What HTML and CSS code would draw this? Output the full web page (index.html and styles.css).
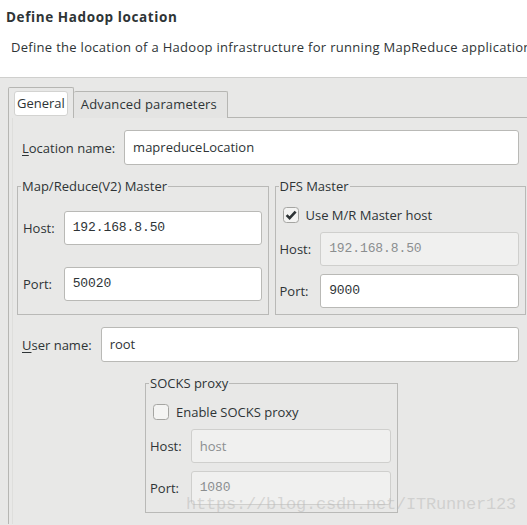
FILE: index.html
```html
<!DOCTYPE html>
<html>
<head>
<meta charset="utf-8">
<link rel="stylesheet" href="styles.css">
</head>
<body>
<header class="head">
  <h1 class="title">Define Hadoop location</h1>
  <p class="desc">Define the location of a Hadoop infrastructure for running MapReduce application</p>
</header>
<div class="folder">
  <div class="tabs">
    <div class="tab tab-active"><span class="tab-focus">General</span></div>
    <div class="tab tab-normal">Advanced parameters</div>
  </div>
  <div class="panel">
    <div class="content">
      <div class="row">
        <label class="lbl"><u>L</u>ocation name:</label>
        <div class="input">mapreduceLocation</div>
      </div>
      <div class="groups">
        <fieldset class="group">
          <legend>Map/Reduce(V2) Master</legend>
          <div class="grid grid-mr">
            <label class="lbl">Host:</label>
            <div class="input mono">192.168.8.50</div>
            <label class="lbl">Port:</label>
            <div class="input mono">50020</div>
          </div>
        </fieldset>
        <fieldset class="group">
          <legend>DFS Master</legend>
          <div class="grid">
            <div class="check-row">
              <span class="check">
                <svg width="16" height="16" viewBox="0 0 16 16"><rect x="0.5" y="0.5" width="15" height="15" rx="3" fill="#f4f4f3" stroke="#a5a5a2"/><path d="M3.6 8.2 L6.6 11.2 L12.6 4.6" fill="none" stroke="#2e3436" stroke-width="2.6"/></svg>
              </span>
              <span>Use M/R Master host</span>
            </div>
            <label class="lbl">Host:</label>
            <div class="input mono disabled">192.168.8.50</div>
            <label class="lbl">Port:</label>
            <div class="input mono">9000</div>
          </div>
        </fieldset>
      </div>
      <div class="row row-user">
        <label class="lbl"><u>U</u>ser name:</label>
        <div class="input">root</div>
      </div>
      <fieldset class="group socks">
        <legend>SOCKS proxy</legend>
        <div class="grid">
          <div class="check-row">
            <span class="check">
              <svg width="16" height="16" viewBox="0 0 16 16"><rect x="0.5" y="0.5" width="15" height="15" rx="3" fill="#f4f4f3" stroke="#a5a5a2"/></svg>
            </span>
            <span>Enable SOCKS proxy</span>
          </div>
          <label class="lbl">Host:</label>
          <div class="input disabled">host</div>
          <label class="lbl">Port:</label>
          <div class="input mono disabled">1080</div>
        </div>
      </fieldset>
    </div>
  </div>
</div>
<div class="watermark">https://blog.csdn.net/ITRunner123</div>
</body>
</html>
```
FILE: styles.css
```css
html, body {
  margin: 0;
  padding: 0;
}
body {
  width: 527px;
  height: 525px;
  overflow: hidden;
  background: #e8e8e7;
  font-family: "Open Sans", "Noto Sans", sans-serif;
  font-size: 13px;
  color: #2e3436;
  position: relative;
}
.head {
  background: #ffffff;
  height: 77px;
  border-bottom: 1px solid #cfcfcd;
  box-sizing: content-box;
  padding: 0;
}
.title {
  margin: 0;
  padding: 8px 0 0 6px;
  font-size: 13.5px;
  font-weight: bold;
  letter-spacing: 0.6px;
  line-height: 18px;
}
.desc {
  margin: 0;
  padding: 12px 0 0 11px;
  line-height: 18px;
  letter-spacing: 0.3px;
  white-space: nowrap;
}
.folder {
  margin: 10px 0 0 8px;
  width: 540px;
}
.tabs {
  display: flex;
  align-items: flex-end;
  height: 30px;
}
.tab {
  box-sizing: border-box;
  border: 1px solid #b6b6b3;
  border-bottom: none;
  border-radius: 2px 2px 0 0;
}
.tab-active {
  height: 31px;
  padding: 3px 5px 0 5px;
  background: #e8e8e7;
  position: relative;
  z-index: 1;
}
.tab-focus {
  display: block;
  background: #ffffff;
  border: 1px solid #d3d3d1;
  border-radius: 3px;
  height: 23px;
  line-height: 22px;
  padding: 0 2px;
}
.tab-normal {
  height: 27px;
  border-left: none;
  padding: 0 10px 0 7px;
  line-height: 25px;
  letter-spacing: 0.15px;
  background: #e4e4e3;
}
.panel {
  border-top: 1px solid #b6b6b3;
  border-left: 1px solid #b6b6b3;
  margin-top: -1px;
  padding: 0 0 0 3px;
  height: 406px;
}
.content {
  box-sizing: border-box;
  width: 514px;
  height: 100%;
  border-left: 1px solid #dededc;
  padding: 12px 0 0 4px;
}
.row {
  display: flex;
  align-items: center;
  gap: 9px;
  padding: 0 7px 0 5px;
}
.row .input {
  flex: 1;
}
.input {
  box-sizing: border-box;
  height: 34px;
  background: #ffffff;
  border: 1px solid #b9b9b6;
  border-radius: 3px;
  padding: 0 8px;
  line-height: 32px;
  white-space: nowrap;
  overflow: hidden;
}
.row .input {
  height: 35px;
  line-height: 33px;
}
.mono {
  font-family: "Liberation Mono", monospace;
  font-size: 13px;
  letter-spacing: -0.1px;
}
.disabled {
  background: #f0f0ef;
  border-color: #cfcfcd;
  color: #8b8e8f;
}
.lbl u {
  text-decoration: underline;
  text-underline-offset: 2px;
}
.groups {
  display: grid;
  grid-template-columns: 1fr 1fr;
  gap: 6px;
  margin-top: 13px;
}
.group {
  margin: 0;
  padding: 0;
  border: 1px solid #b9b9b7;
  min-width: 0;
}
.group legend {
  margin-left: 3px;
  padding: 0 1px;
  line-height: 17px;
}
.grid {
  display: grid;
  grid-template-columns: auto 1fr;
  column-gap: 9px;
  row-gap: 8px;
  align-items: center;
  padding: 9px 6px 6px 4px;
}
.grid-mr {
  padding: 16px 6px 13px 5px;
  row-gap: 22px;
}
.check-row {
  grid-column: 1 / 3;
  display: flex;
  align-items: center;
  gap: 7px;
  height: 21px;
  padding-left: 3px;
  margin-bottom: -1px;
}
.check {
  display: flex;
  width: 16px;
  height: 16px;
}
.row-user {
  margin-top: 12px;
}
.socks {
  width: 253px;
  box-sizing: border-box;
  margin: 13px auto 0 auto;
}
.socks .grid {
  padding-bottom: 7px;
}
.watermark {
  position: absolute;
  left: 186px;
  top: 495px;
  font-family: "Liberation Mono", monospace;
  font-size: 17px;
  line-height: 20px;
  color: rgba(185, 185, 183, 0.5);
  letter-spacing: -0.2px;
  white-space: nowrap;
  pointer-events: none;
}
```
